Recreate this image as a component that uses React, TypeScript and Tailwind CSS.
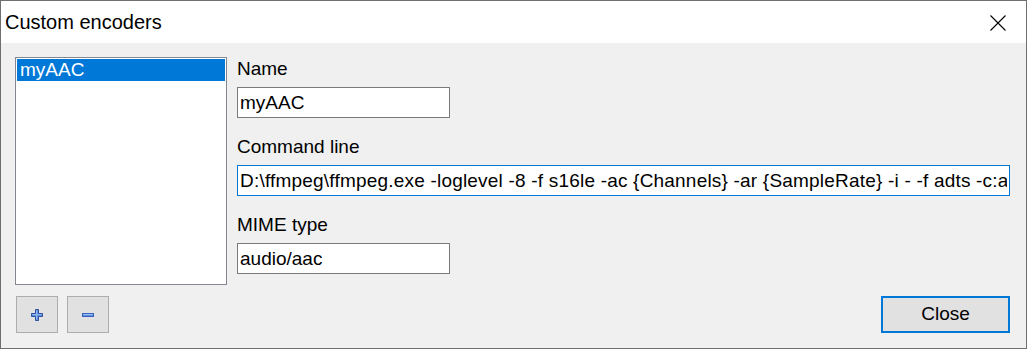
import React from "react";

const font = { fontFamily: '"Liberation Sans", Arial, sans-serif' };

function PlusIcon() {
  return (
    <svg width="12" height="12" viewBox="0 0 12 12">
      <path
        d="M4.5 0.5h3v4h4v3h-4v4h-3v-4h-4v-3h4z"
        fill="#5b8fe0"
        stroke="#2f4f9f"
        strokeWidth="1"
      />
      <path d="M5.5 1.5v9M1.5 5.5h9" stroke="#8fb6f0" strokeWidth="1" />
    </svg>
  );
}

function MinusIcon() {
  return (
    <svg width="12" height="4" viewBox="0 0 12 4">
      <rect x="0.5" y="0.5" width="11" height="3" fill="#5b8fe0" stroke="#3a63c0" />
      <path d="M1.5 1.5h9" stroke="#9cc0f4" strokeWidth="1" />
    </svg>
  );
}

function Field({
  label,
  value,
  wide,
  focused,
}: {
  label: string;
  value: string;
  wide?: boolean;
  focused?: boolean;
}) {
  return (
    <div className="flex flex-col">
      <div className="h-[24px] leading-[24px] text-[19px] text-black">{label}</div>
      <input
        readOnly
        value={value}
        className={
          "mt-[6px] h-[31px] px-[2px] text-[19px] text-black bg-white outline-none border " +
          (focused ? "border-[#0078d7] tracking-[0.2px] " : "border-[#7a7a7a] ") +
          (wide ? "w-full" : "w-[213px]")
        }
        style={font}
      />
    </div>
  );
}

export default function App() {
  return (
    <div className="w-[1028px] h-[350px] bg-white" style={font}>
      <div className="w-[1027px] h-[349px] border border-[#6f6f6f] flex flex-col bg-[#f0f0f0]">
        <div className="h-[42px] bg-white flex items-center justify-between pl-[4px] pr-[20px]">
          <span className="text-[20px] text-black">Custom encoders</span>
          <svg width="16" height="16" viewBox="0 0 16 16" className="mt-[1px]">
            <path d="M0.5 0.5L15.5 15.5M15.5 0.5L0.5 15.5" stroke="#000" strokeWidth="1.1" />
          </svg>
        </div>

        <div className="flex-1 flex flex-col pl-[14px] pr-[16px] pt-[14px]">
          <div className="flex gap-[10px]">
            <div className="w-[212px] h-[228px] bg-white border border-[#828790] p-[1px]">
              <div className="h-[22px] bg-[#0078d7] text-white text-[19px] leading-[22px] pl-[3px]">
                myAAC
              </div>
            </div>
            <div className="flex-1 flex flex-col gap-[17px]">
              <Field label="Name" value="myAAC" />
              <Field
                label="Command line"
                value="D:\ffmpeg\ffmpeg.exe -loglevel -8 -f s16le -ac {Channels} -ar {SampleRate} -i - -f adts -c:a aac -b:a 256k -"
                wide
                focused
              />
              <Field label="MIME type" value="audio/aac" />
            </div>
          </div>

          <div className="flex items-start justify-between mt-[11px]">
            <div className="flex gap-[9px] ml-[1px]">
              <button className="w-[42px] h-[37px] bg-[#e1e1e1] border border-[#adadad] flex items-center justify-center">
                <PlusIcon />
              </button>
              <button className="w-[42px] h-[37px] bg-[#e1e1e1] border border-[#adadad] flex items-center justify-center">
                <MinusIcon />
              </button>
            </div>
            <button className="w-[129px] h-[37px] bg-[#e1e1e1] border-2 border-[#0078d7] text-[19px] text-black flex items-center justify-center">
              Close
            </button>
          </div>
        </div>
      </div>
    </div>
  );
}
